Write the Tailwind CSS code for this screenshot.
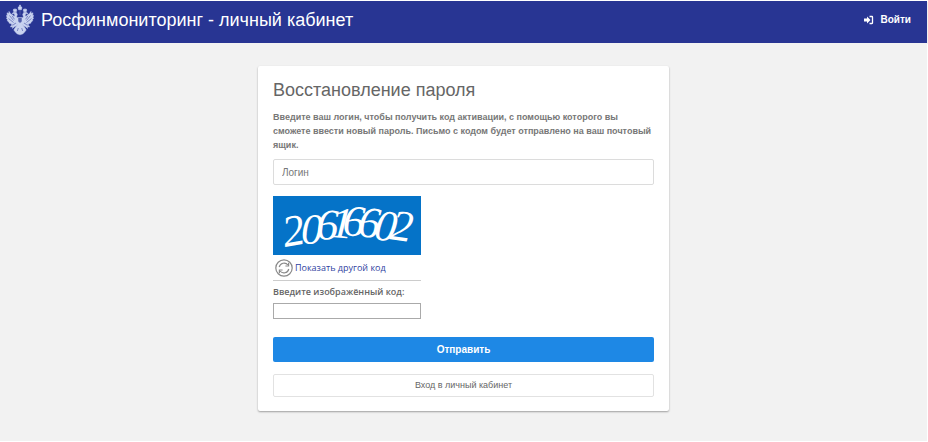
<!DOCTYPE html>
<html lang="ru">
  <head>
    <meta charset="UTF-8" />
    <meta name="viewport" content="width=device-width, initial-scale=1.0" />
    <title>Росфинмониторинг - личный кабинет</title>
    <script src="https://cdn.jsdelivr.net/npm/@tailwindcss/browser@4"></script>
  </head>
  <body class="bg-white font-['Liberation_Sans',Arial,sans-serif] text-[#666]">
    <div class="flex flex-col min-h-screen py-px pr-px">
      <!-- Header -->
      <header class="flex items-center justify-between h-[42px] pl-1.5 pr-4 pb-1 bg-[#283593] shadow-[0_1px_1px_rgba(0,0,0,0.35)] text-white">
        <a href="#" class="flex items-center gap-[7px]">
          <svg class="w-7 h-8" viewBox="0 0 28 32" fill="#c9d3f0" stroke="#c9d3f0" stroke-width=".5" stroke-linejoin="round">
            <path d="M12 3.5 13 2.6 13.5 3V1h1v2l.5-.4 1 .9-.6 2.3h-2.8z" />
            <path d="M7.2 6 8 4.8l1 .7 1-.7.8 1.2-.5 1.8H7.8zM17.2 6l.8-1.2 1 .7 1-.7.8 1.2-.6 1.8h-2.4z" />
            <path d="M6 9.5 8 8.2l2.3.2 1 2.2-.8 2.4 1.8 1.2h3.4l1.8-1.2-.8-2.4 1-2.2 2.3-.2 2 1.3-2.3.3-.5 1.5 1.2 2.2-1.4 4.8-3 2.8h-4l-3-2.8-1.4-4.8 1.2-2.2-.5-1.5z" />
            <path d="M8.5 13.5 6.8 11 4.6 9.7 3 7.4l-.2 2.2L1 8.8l.4 2.5-1 .1.8 2.3-.8.3 1.3 2-.5.7 1.9 1.5-.1.9 2.2.7.5.9 2-.4 1.7-1.8zM19.5 13.5l1.7-2.5 2.2-1.3L25 7.4l.2 2.2 1.8-.8-.4 2.5 1 .1-.8 2.3.8.3-1.3 2 .5.7-1.9 1.5.1.9-2.2.7-.5.9-2-.4-1.7-1.8z" />
            <path d="m10.5 19-3 2.2-2.3.2-.7 1.6 2.2-.3-.3 1.7 2-1.6 3-1.5zM17.5 19l3 2.2 2.3.2.7 1.6-2.2-.3.3 1.7-2-1.6-3-1.5z" />
            <path d="m12 20-3 4-1.2 2 1.2 1.6 2 2.2 3 1 3-1 2-2.2 1.2-1.6-1.2-2L16 20z" />
            <path d="M3.5 11.5l4 5M2.5 14.5l5 4M6 11.8l2.5 3.5M24.5 11.5l-4 5M25.5 14.5l-5 4M22 11.8l-2.5 3.5M12.3 24l-1 3M15.7 24l1 3M14 6.5v4.5" fill="none" stroke="#5966b0" stroke-width=".7" />
            <path d="M12 13.5h4v4l-2 1.8-2-1.8z" fill="#5461ac" />
          </svg>
          <span class="text-[18px] leading-6">Росфинмониторинг - личный кабинет</span>
        </a>
        <a href="#" class="flex items-center gap-1.5 text-[10px] leading-4 font-bold">
          <svg class="w-2.5 h-2.5" viewBox="0 0 20 20" fill="#fff">
            <path d="M0 7h6V3l7 7-7 7v-4H0z" />
            <path d="M11 3h5q1 0 1 1v12q0 1-1 1h-5" fill="none" stroke="#fff" stroke-width="2.6" />
          </svg>
          Войти
        </a>
      </header>

      <!-- Password recovery -->
      <main class="grow bg-[#f2f2f2] pt-[23px] pb-7">
        <form class="w-full max-w-[411px] mx-auto px-[15px] pt-3 pb-[14px] bg-white rounded-xs shadow-[0_1px_2px_rgba(0,0,0,0.35)]">
          <h1 class="text-[18px] leading-6">Восстановление пароля</h1>
          <p class="mt-2 text-[9px] leading-[14px] font-bold text-[#777]">
            Введите ваш логин, чтобы получить код активации, с помощью которого вы сможете ввести новый пароль. Письмо с кодом будет отправлено на ваш почтовый ящик.
          </p>
          <input type="text" aria-label="Логин" placeholder="Логин" class="block w-full h-[26px] mt-[7px] px-2 border border-[#dcdcdc] rounded-xs text-[10px] placeholder:text-[#777]" />

          <!-- Captcha -->
          <div class="w-[148px] mt-[11px]">
            <svg class="block w-full bg-[#0573c8]" viewBox="0 0 148 59" fill="#fff" font-family="Liberation Serif, serif" font-style="italic" font-size="44">
              <text x="12 28 43 57 69 84 100 116" y="51 48 43 41 39 40 43 43" rotate="-10 0 2 4 4 6 8 8">20616602</text>
            </svg>
            <button type="button" class="flex items-center w-full h-[26px] pl-0.5 gap-0.5 border-b border-[#ccc] font-['Open_Sans',sans-serif] text-[9px] text-[#303f9f]">
              <svg class="w-[18px] h-[18px]" viewBox="0 0 18 18" fill="none" stroke="#8a8a8a" stroke-width="1.2">
                <circle cx="9" cy="9" r="8.2" />
                <path d="M4.2 8A5 5 0 0 1 13 6M13.8 10A5 5 0 0 1 5 12" />
                <path d="M13.6 3.8V7h-3.2M4.4 14.2V11h3.2" />
              </svg>
              Показать другой код
            </button>
            <label for="code" class="block mt-1 font-['Open_Sans',sans-serif] text-[9px] leading-[14px] font-semibold">Введите изображённый код:</label>
            <input id="code" type="text" class="block w-full h-4 mt-1 px-1 border border-[#aaa] text-[10px]" />
          </div>

          <button type="submit" class="block w-full h-[25px] mt-[18px] bg-[#1e88e5] rounded-xs text-[10px] font-bold text-white">Отправить</button>
          <a href="#" class="flex items-center justify-center h-[23px] mt-3 border border-[#e2e2e2] rounded-xs text-[9px]">Вход в личный кабинет</a>
        </form>
      </main>
    </div>
  </body>
</html>
